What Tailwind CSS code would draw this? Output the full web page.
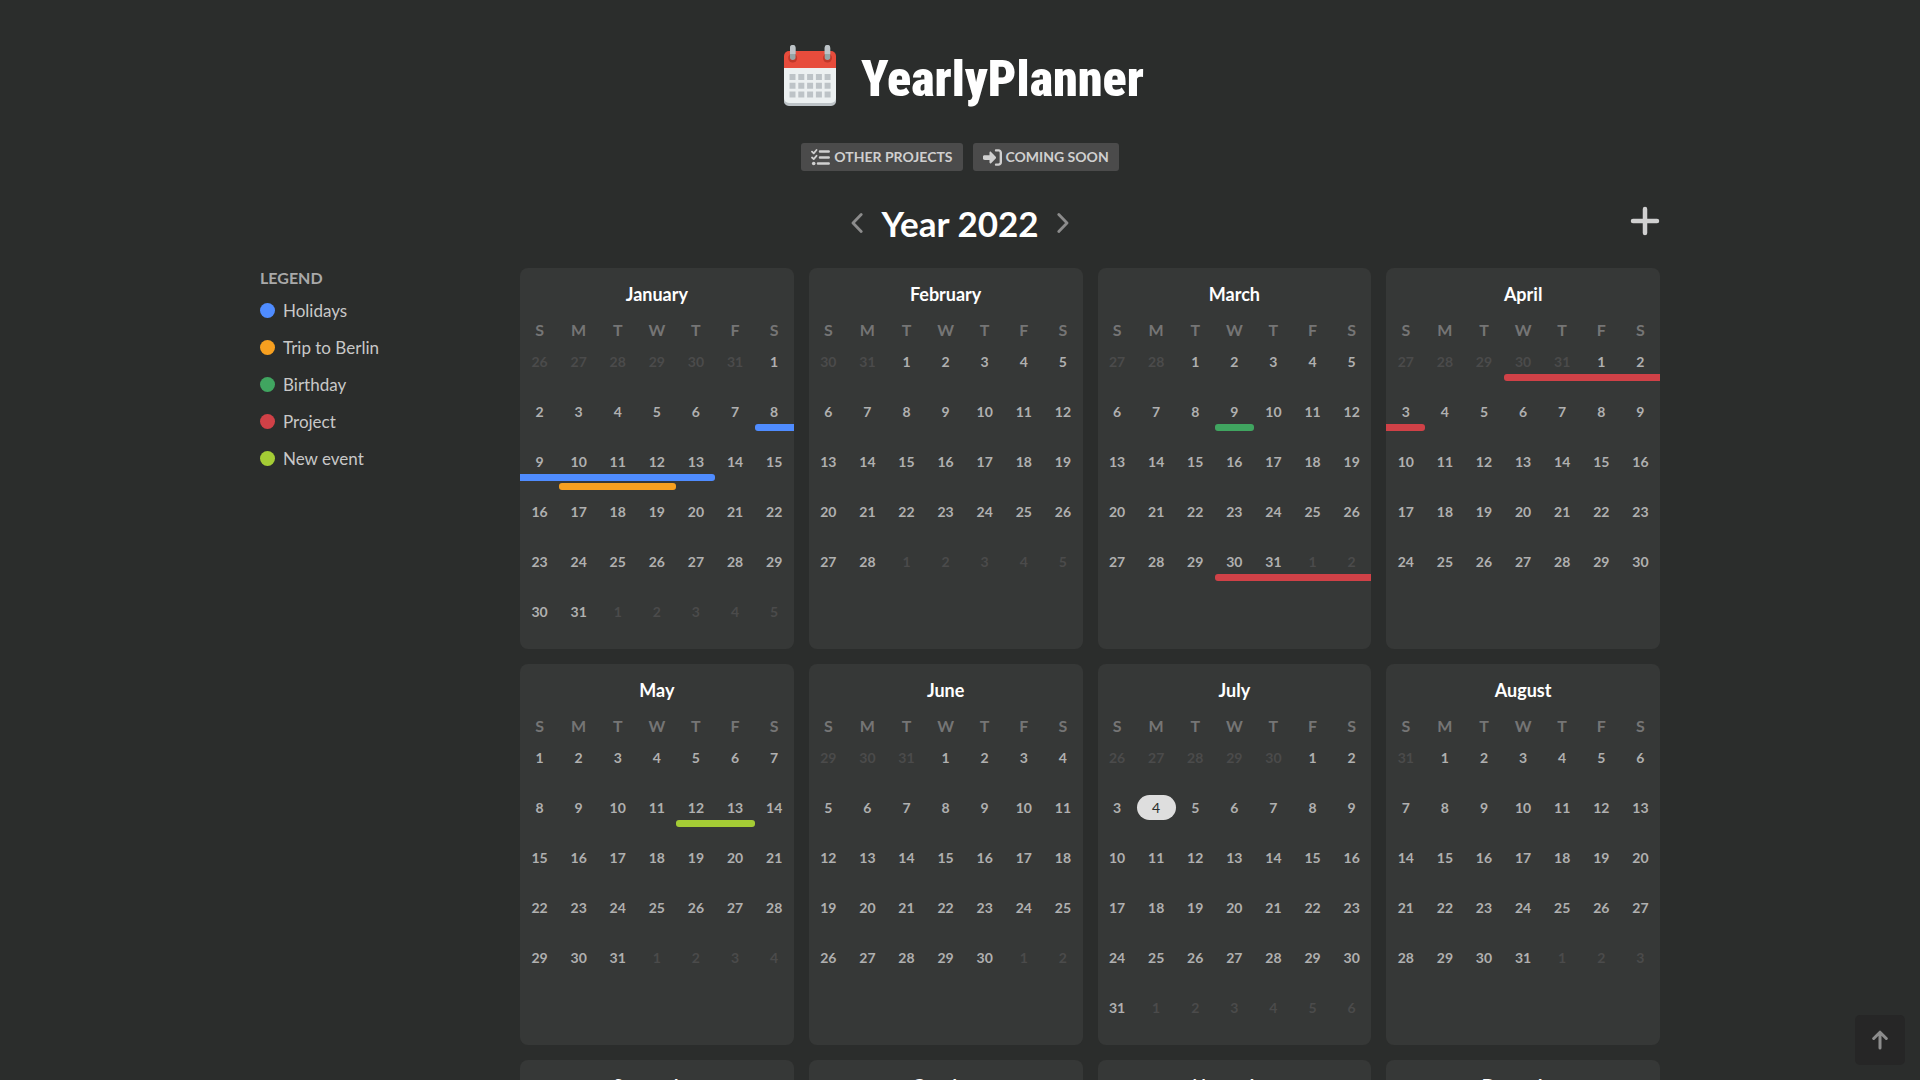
<!DOCTYPE html>
<html lang="en">
<head>
<meta charset="utf-8">
<meta name="viewport" content="width=device-width, initial-scale=1">
<title>YearlyPlanner</title>
<script src="https://cdn.jsdelivr.net/npm/@tailwindcss/browser@4"></script>
</head>
<body class="min-h-screen bg-[#2b2d2c] font-['Lato',sans-serif] text-[#d0d0d0]">
<div class="mx-auto max-w-[1400px] pb-4">
  <header class="flex flex-col items-center pt-[45px]">
    <a href="#" class="flex h-[62px] items-center gap-6 pl-2">
      <svg class="h-[62px] w-[53px]" viewBox="0 0 53 62" aria-hidden="true">
        <path d="M0 20h52v35a5 5 0 0 1-5 6H5a5 5 0 0 1-5-6z" fill="#bdc3c7"/>
        <path d="M0 20h52v33a5 5 0 0 1-5 5H5a5 5 0 0 1-5-5z" fill="#ecf0f1"/>
        <path d="M0 23V11a5 5 0 0 1 5-5h42a5 5 0 0 1 5 5v12z" fill="#e74c3c"/>
        <circle cx="8.700" cy="13" r="4.500" fill="#c0392b"/><circle cx="43.500" cy="13" r="4.500" fill="#c0392b"/>
        <rect x="6" y="0" width="5.500" height="15" rx="2.700" fill="#95a5a6"/><rect x="40.700" y="0" width="5.500" height="15" rx="2.700" fill="#95a5a6"/>
        <path d="M6 9V2.700a2.700 2.700 0 0 1 5.500 0V9zM40.700 9V2.700a2.700 2.700 0 0 1 5.500 0V9z" fill="#bdc3c7"/>
        <path d="M5.500 29h6v6h-6zm8.800 0h6v6h-6zm8.800 0h6v6h-6zm8.800 0h6v6h-6zm8.700 0h6v6h-6zM5.500 37.700h6v6h-6zm8.800 0h6v6h-6zm8.800 0h6v6h-6zm8.800 0h6v6h-6zm8.700 0h6v6h-6zM5.500 46.400h6v6h-6zm8.800 0h6v6h-6zm8.800 0h6v6h-6zm8.800 0h6v6h-6zm8.700 0h6v6h-6z" fill="#bdc3c7"/>
      </svg>
      <h1 class="pt-1.5 font-['Roboto_Condensed','Liberation_Sans_Narrow','Liberation_Sans',sans-serif] text-[50px] leading-14 font-black text-white">YearlyPlanner</h1>
    </a>
    <nav class="mt-9 flex gap-2.5 text-sm font-bold">
      <button class="flex h-7 items-center gap-1 rounded-[3px] bg-[#4b4b4b] px-2.5">
        <svg class="size-[19px]" viewBox="0 0 19 19" fill="none" stroke="currentColor" stroke-linecap="round" stroke-linejoin="round" aria-hidden="true">
          <path d="M1 3.700l1.700 1.600L5.500 2M1 9.500l1.700 1.600L5.500 7.800" stroke-width="1.800"/><path d="M9 3.500h8.700M9 9.500h8.700M7 15.500h10.700" stroke-width="2.500"/><circle cx="2.700" cy="15.500" r="1.800" fill="currentColor" stroke="none"/>
        </svg>
        OTHER PROJECTS
      </button>
      <button class="flex h-7 items-center gap-1 rounded-[3px] bg-[#4b4b4b] px-2.5">
        <svg class="size-[19px]" viewBox="0 0 512 512" fill="currentColor" aria-hidden="true">
          <path d="M352 96l64 0c17.700 0 32 14.300 32 32l0 256c0 17.700-14.300 32-32 32l-64 0c-17.700 0-32 14.300-32 32s14.300 32 32 32l64 0c53 0 96-43 96-96l0-256c0-53-43-96-96-96l-64 0c-17.700 0-32 14.300-32 32s14.300 32 32 32zM217.900 105.900c-4.400-6-12-9.900-20-9.900-12.500 0-22.900 10-22.900 23l0 73-128 0c-26 0-47 14-47 32l0 64c0 18 21 32 47 32l128 0 0 73c0 13 10.400 23 22.900 23 8 0 15.600-3 20-8.400l125-128c6-6 9-14 9-23.600s-3-17-9-23z"/>
        </svg>
        COMING SOON
      </button>
    </nav>
  </header>

  <div class="mt-7 grid h-12 grid-cols-[1fr_auto_1fr] items-center">
    <div></div>
    <div class="flex items-center gap-[18px]">
      <button aria-label="Previous year" class="text-[#8c8c8c]"><svg class="h-5 w-3" viewBox="0 0 12 20" fill="none" stroke="currentColor" stroke-width="2.800" stroke-linecap="round" stroke-linejoin="round"><path d="M10.200 1.600L2 10l8.200 8.400"/></svg></button>
      <h2 class="text-[35px] leading-[46px] font-bold text-white">Year 2022</h2>
      <button aria-label="Next year" class="text-[#8c8c8c]"><svg class="h-5 w-3" viewBox="0 0 12 20" fill="none" stroke="currentColor" stroke-width="2.800" stroke-linecap="round" stroke-linejoin="round"><path d="M1.800 1.600L10 10l-8.200 8.400"/></svg></button>
    </div>
    <button aria-label="Add event" class="justify-self-end pb-1"><svg class="size-[30px]" viewBox="0 0 30 30" fill="none" stroke="currentColor" stroke-width="4.500" stroke-linecap="round"><path d="M15 3v24M3 15h24"/></svg></button>
  </div>

  <div class="mt-[21px] grid grid-cols-[245px_1fr] gap-[15px]">
    <aside>
      <h3 class="text-base leading-5 font-bold text-[#a9a9a9]">LEGEND</h3>
      <ul id="legend" class="mt-1 text-[17px] text-[#c8c8c8]"></ul>
    </aside>
    <main id="months" class="grid grid-cols-4 gap-[15px]"></main>
  </div>
</div>
<button aria-label="Back to top" class="fixed right-[15px] bottom-[15px] flex size-[50px] items-center justify-center rounded-[5px] bg-[#262626] text-[#8c8c8c]">
  <svg class="h-5 w-4" viewBox="0 0 16 20" fill="none" stroke="currentColor" stroke-width="3" stroke-linecap="round" stroke-linejoin="round" aria-hidden="true"><path d="M8 18V2.500M1.700 8.500L8 2.200l6.300 6.300"/></svg>
</button>
<script>
const YEAR = 2022;
const TODAY = Date.UTC(2022, 6, 4);
const names = ['January','February','March','April','May','June','July','August','September','October','November','December'];
const day = (m, d) => Date.UTC(YEAR, m - 1, d);
const events = [
  { name: 'Holidays', color: 'bg-[#4f8cff]', from: day(1, 8), to: day(1, 13), lane: 0 },
  { name: 'Trip to Berlin', color: 'bg-[#f7a020]', from: day(1, 10), to: day(1, 12), lane: 1 },
  { name: 'Birthday', color: 'bg-[#40a560]', from: day(3, 9), to: day(3, 9), lane: 0 },
  { name: 'Project', color: 'bg-[#d04147]', from: day(3, 30), to: day(4, 3), lane: 0 },
  { name: 'New event', color: 'bg-[#a4cc35]', from: day(5, 12), to: day(5, 13), lane: 0 }
];

document.getElementById('legend').innerHTML = events.map(e =>
  `<li class="flex h-[37px] items-center gap-2"><span class="size-[15px] rounded-full ${e.color}"></span>${e.name}</li>`).join('');

function cell(t, m) {
  const date = new Date(t);
  const tone = t === TODAY ? 'rounded-full bg-[#dedede] font-normal text-[#2b2d2c]'
    : date.getUTCMonth() === m ? 'font-bold text-[#b0b0b0]' : 'font-bold text-[#4b4b4b]';
  const bars = events.filter(e => t >= e.from && t <= e.to).map(e =>
    `<div class="h-[7px] ${e.color} ${e.lane ? 'mt-0.5' : ''} ${t === e.from ? 'rounded-l-[3px]' : ''} ${t === e.to ? 'rounded-r-[3px]' : ''}"></div>`).join('');
  return `<td class="h-[50px] p-0 align-top"><div class="h-[25px] leading-[25px] ${tone}">${date.getUTCDate()}</div>${bars}</td>`;
}

document.getElementById('months').innerHTML = names.map((name, m) => {
  const first = new Date(Date.UTC(YEAR, m, 1)).getUTCDay();
  const length = new Date(Date.UTC(YEAR, m + 1, 0)).getUTCDate();
  const weeks = Math.ceil((first + length) / 7);
  let rows = '';
  for (let w = 0; w < weeks; w++) {
    rows += '<tr>';
    for (let d = 0; d < 7; d++) rows += cell(Date.UTC(YEAR, m, 1 - first + w * 7 + d), m);
    rows += '</tr>';
  }
  return `<section class="overflow-hidden rounded-lg bg-[#363837] pt-3 text-center">
    <h3 class="text-lg leading-7 font-bold text-white">${name}</h3>
    <table class="mt-2.5 w-full table-fixed text-sm">
      <thead><tr>${[...'SMTWTFS'].map(d => `<th scope="col" class="h-[31px] p-0 align-top text-base leading-6 font-bold text-[#757575]">${d}</th>`).join('')}</tr></thead>
      <tbody>${rows}</tbody>
    </table>
  </section>`;
}).join('');
</script>
</body>
</html>
